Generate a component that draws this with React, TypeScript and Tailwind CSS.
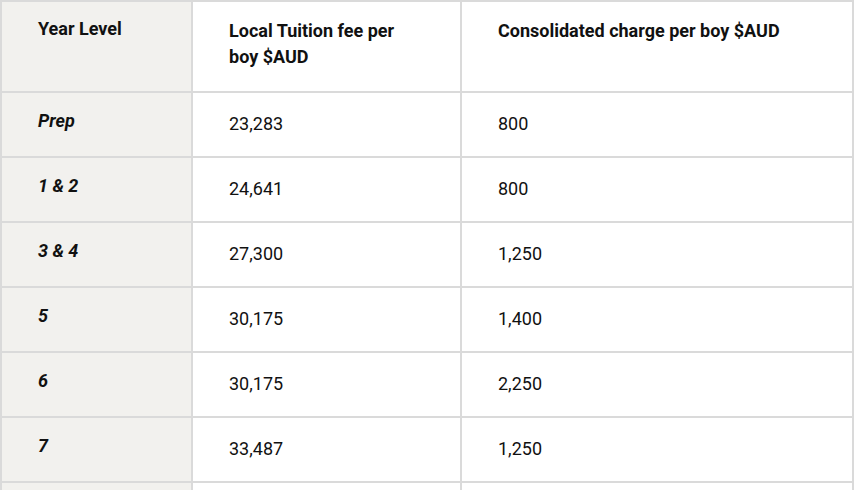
const rows = [
  { level: "Prep", tuition: "23,283", charge: "800" },
  { level: "1 & 2", tuition: "24,641", charge: "800" },
  { level: "3 & 4", tuition: "27,300", charge: "1,250" },
  { level: "5", tuition: "30,175", charge: "1,400" },
  { level: "6", tuition: "30,175", charge: "2,250" },
  { level: "7", tuition: "33,487", charge: "1,250" },
];

export default function App() {
  return (
    <div className="bg-white min-h-screen font-['Roboto',sans-serif] text-[18px] leading-[26px] text-[#111]">
      <div className="grid grid-cols-[191px_269px_392px] w-[854px] border-l-2 border-t-2 border-[#dadada]">
        {/* Header */}
        <div className="h-[91px] bg-[#f2f1ee] border-r-2 border-b-2 border-[#dadada] px-[36px] pt-[14px] font-bold">
          Year Level
        </div>
        <div className="h-[91px] border-r-2 border-b-2 border-[#dadada] px-[36px] pt-[16px] font-bold">
          Local Tuition fee per boy $AUD
        </div>
        <div className="h-[91px] border-r-2 border-b-2 border-[#dadada] px-[36px] pt-[16px] font-bold">
          Consolidated charge per boy $AUD
        </div>

        {rows.map((r) => (
          <div key={r.level} className="contents">
            <div className="h-[65px] bg-[#f2f1ee] border-r-2 border-b-2 border-[#dadada] px-[36px] pt-[15px] font-bold italic">
              {r.level}
            </div>
            <div className="h-[65px] border-r-2 border-b-2 border-[#dadada] px-[36px] pt-[18px]">
              {r.tuition}
            </div>
            <div className="h-[65px] border-r-2 border-b-2 border-[#dadada] px-[36px] pt-[18px]">
              {r.charge}
            </div>
          </div>
        ))}

        {/* next row, cut off by the frame */}
        <div className="h-[65px] bg-[#f2f1ee] border-r-2 border-b-2 border-[#dadada]" />
        <div className="h-[65px] border-r-2 border-b-2 border-[#dadada]" />
        <div className="h-[65px] border-r-2 border-b-2 border-[#dadada]" />
      </div>
    </div>
  );
}
